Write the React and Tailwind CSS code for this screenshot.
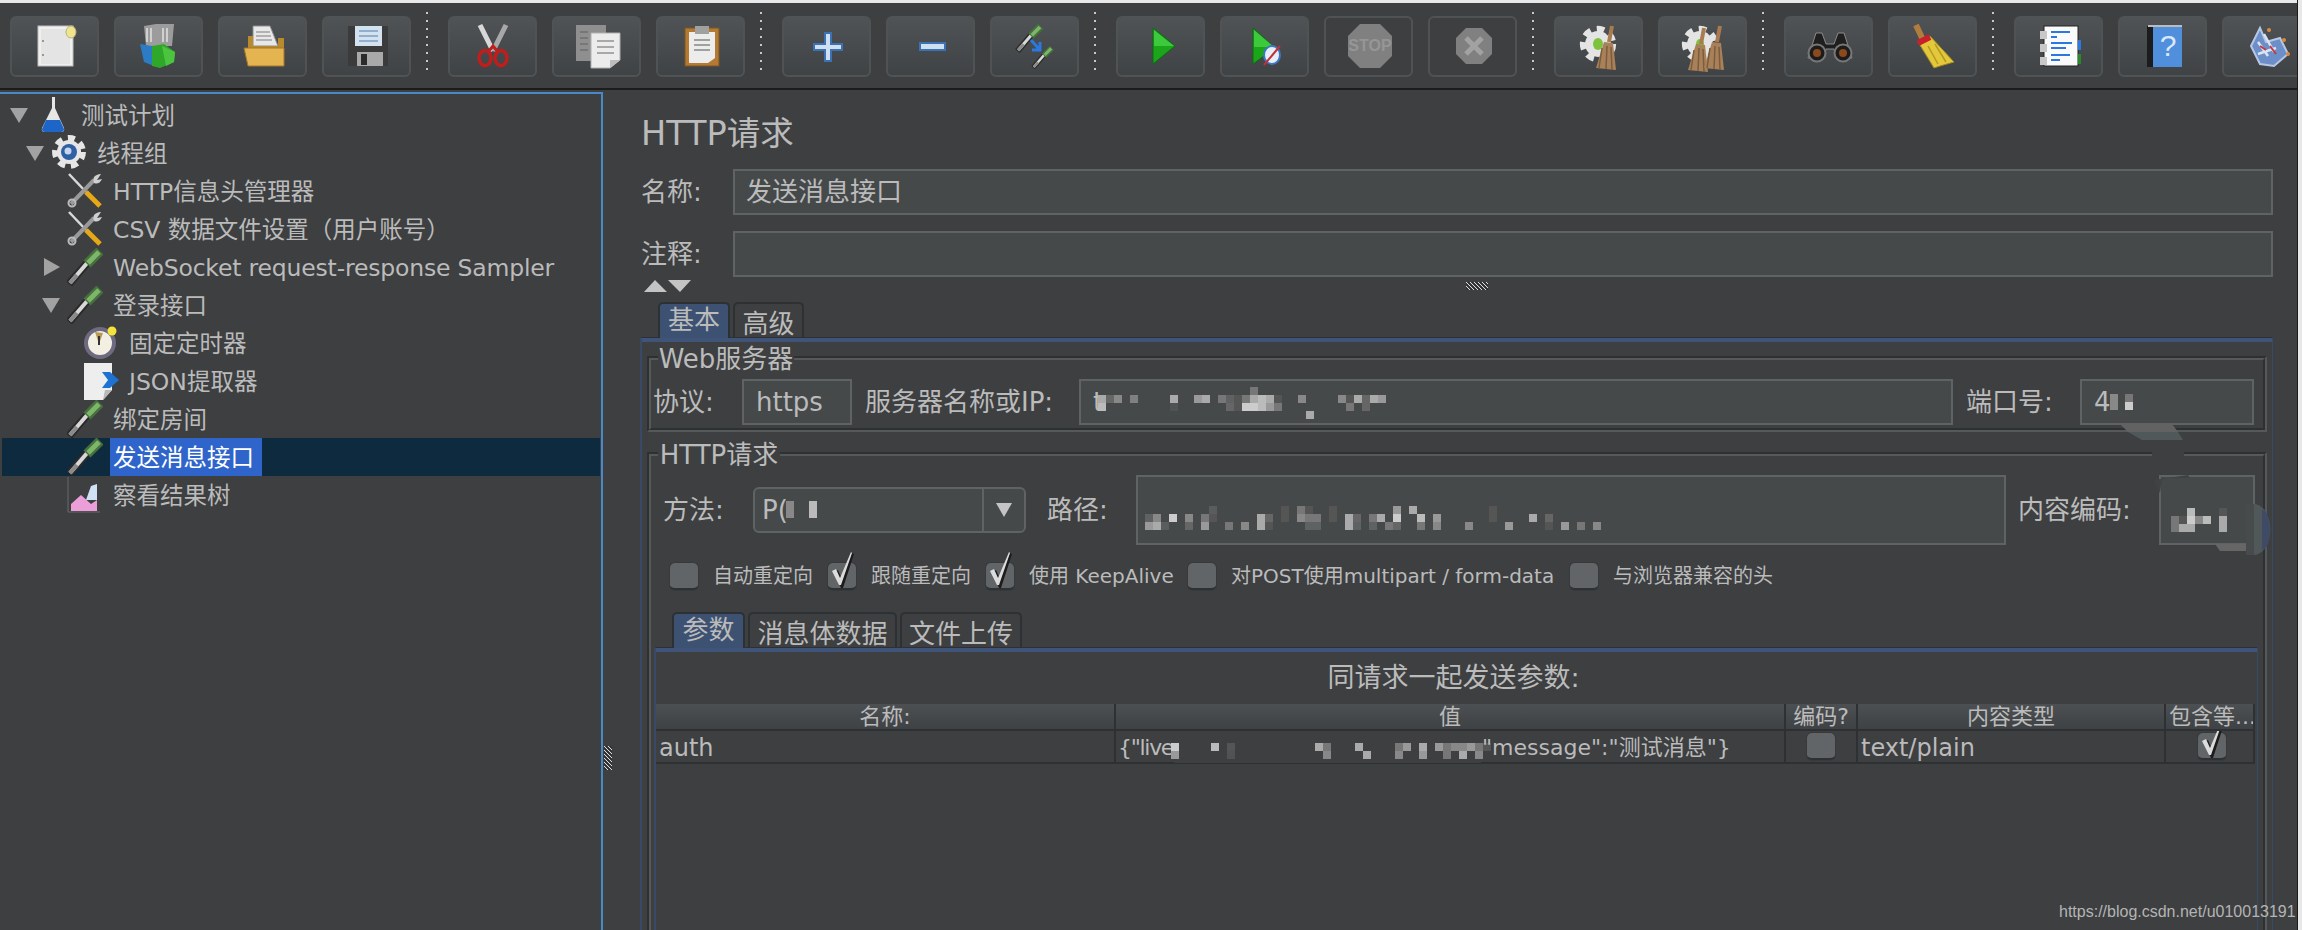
import React from 'react';

// ---- toolbar icons, drawn in the 89x61 box of a button ----
const Pipette = ({ x = 0, y = 0, s = 1 }) => (
    <g transform={`translate(${x} ${y}) scale(${s})`}>
        <path d="M2 36 L21 14" stroke="#2a2a2a" strokeWidth="8" fill="none" />
        <path d="M3 35 L21 14" stroke="#d8d8d8" strokeWidth="4" fill="none" />
        <path d="M3 35 L10 27" stroke="#8a8a8a" strokeWidth="4" fill="none" />
        <path d="M20 16 L33 3" stroke="#46703c" strokeWidth="10" fill="none" />
        <path d="M21 15 L32 4" stroke="#7db56a" strokeWidth="5" fill="none" />
    </g>
);

const Gear = ({ cx, cy, r, fill = '#e4e4e4' }) => (
    <g>
        <circle cx={cx} cy={cy} r={r} fill="none" stroke={fill} strokeWidth={r * 0.42} strokeDasharray={`${r * 0.5} ${r * 0.42}`} />
        <circle cx={cx} cy={cy} r={r * 0.86} fill={fill} />
    </g>
);

const Broom = ({ x, y }) => (
    <g transform={`translate(${x} ${y})`}>
        <path d="M16 0 L13 16" stroke="#a87c50" strokeWidth="4" />
        <path d="M8 16 L17 17 L20 44 L0 42 Z" fill="#a8815a" />
        <path d="M6 22 L3 42 M11 20 L10 43 M15 21 L16 44" stroke="#7d5c3c" strokeWidth="1.5" />
    </g>
);

const toolbarIcons = {
    door: (
        <g>
            <rect x="28" y="10" width="35" height="40" fill="#f0f0f0" stroke="#bdbdbd" />
            <rect x="31" y="13" width="29" height="35" fill="#e4e4e4" />
            <rect x="32" y="24" width="2" height="2" fill="#999" />
            <rect x="32" y="38" width="2" height="2" fill="#999" />
            <ellipse cx="61" cy="16" rx="5" ry="6" fill="#efe58f" stroke="#b9b27a" />
        </g>
    ),
    templates: (
        <g>
            <path d="M30 10 L42 8 L60 8 L58 30 L32 30 Z" fill="#9c9c9c" />
            <path d="M33 12 V26 M37 12 V26 M49 12 V26 M53 12 V26" stroke="#d0d0d0" strokeWidth="2" />
            <path d="M26 28 L38 30 L40 50 L30 46 Z" fill="#2b7cc4" />
            <path d="M38 30 L50 28 L61 36 L60 46 L46 52 L38 50 Z" fill="#2fa82a" />
            <path d="M48 30 L61 36 L60 46 L52 50 Z" fill="#4dc43f" />
        </g>
    ),
    open: (
        <g>
            <path d="M35 10 L52 10 L60 30 L35 30 Z" fill="#e8e8e8" stroke="#8d8d8d" />
            <path d="M38 16 H52 M38 20 H53 M38 24 H54" stroke="#a0a0a0" strokeWidth="1.5" />
            <path d="M30 20 L35 20 L35 30 L60 30 L60 22 L66 22 L66 50 L30 50 Z" fill="#b78a2e" />
            <path d="M26 32 L66 32 L66 50 L30 50 Z" fill="#e3b44f" stroke="#a5762a" />
        </g>
    ),
    save: (
        <g>
            <path d="M26 10 H66 V50 H26 Z" fill="#3b3b3b" />
            <rect x="33" y="10" width="27" height="20" fill="#d4e1ee" />
            <path d="M37 15 H56 M37 20 H56 M37 25 H56" stroke="#7aa0c4" strokeWidth="1.5" />
            <rect x="35" y="36" width="26" height="14" fill="#a9a9a9" />
            <rect x="39" y="38" width="6" height="11" fill="#2b2b2b" />
        </g>
    ),
    cut: (
        <g>
            <path d="M32 9 L45 35" stroke="#d8d8d8" strokeWidth="5" />
            <path d="M58 9 L45 35" stroke="#a8a8a8" strokeWidth="5" />
            <ellipse cx="37" cy="42" rx="6" ry="7.5" fill="none" stroke="#c01d1d" strokeWidth="3.5" />
            <ellipse cx="53" cy="42" rx="6" ry="7.5" fill="none" stroke="#c01d1d" strokeWidth="3.5" />
            <path d="M40 36 L45 30 L50 36" fill="none" stroke="#c01d1d" strokeWidth="3" />
        </g>
    ),
    copy: (
        <g>
            <rect x="24" y="9" width="30" height="36" fill="#8f8f8f" />
            <path d="M28 16 H36 M28 22 H36 M28 28 H36 M28 34 H36" stroke="#777" strokeWidth="2" />
            <path d="M39 17 H68 V44 L58 52 H39 Z" fill="#ececec" stroke="#b0b0b0" />
            <path d="M45 25 H62 M45 31 H62 M45 37 H62" stroke="#a8a8a8" strokeWidth="2" />
            <path d="M58 52 V44 H68 Z" fill="#bdbdbd" />
        </g>
    ),
    paste: (
        <g>
            <rect x="29" y="12" width="34" height="38" fill="#b37a33" stroke="#7f5522" />
            <path d="M33 16 H59 V42 L52 47 H33 Z" fill="#ececec" />
            <rect x="39" y="10" width="14" height="8" fill="#a0a0a0" />
            <path d="M38 24 H54 M38 29 H54 M38 34 H54" stroke="#a0a0a0" strokeWidth="2" />
        </g>
    ),
    plus: (
        <path d="M43 17 H49 V28 H60 V34 H49 V45 H43 V34 H32 V28 H43 Z" fill="#cfe0f2" stroke="#3c72b4" strokeWidth="2" />
    ),
    minus: <rect x="34" y="27" width="25" height="7" fill="#cfe0f2" stroke="#3c72b4" strokeWidth="2" />,
    toggle: (
        <g>
            <Pipette x="26" y="8" s="0.75" />
            <Pipette x="42" y="30" s="0.6" />
            <path d="M41 24 L49 33 M50 26 L50 34 L42 34" stroke="#2a78e0" strokeWidth="3" fill="none" />
        </g>
    ),
    play: (
        <g>
            <path d="M37 12 L59 30 L37 48 Z" fill="#1ba51b" stroke="#0e6a12" />
            <path d="M38 14 L58 30 L38 30 Z" fill="#3cc93c" />
        </g>
    ),
    playNoTimer: (
        <g>
            <path d="M33 12 L55 32 L33 48 Z" fill="#1ba51b" stroke="#0e6a12" />
            <path d="M34 14 L54 31 L34 31 Z" fill="#3cc93c" />
            <ellipse cx="52" cy="39" rx="8" ry="9" fill="#e8eef6" stroke="#3c78c0" strokeWidth="2" />
            <path d="M44 49 L60 30" stroke="#c0303a" strokeWidth="2" />
        </g>
    ),
    stop: (
        <g>
            <path d="M36 8 H56 L68 20 V40 L56 52 H36 L24 40 V20 Z" fill="#808080" />
            <text x="46" y="35" textAnchor="middle" fontSize="16" fontFamily="Liberation Sans" fontWeight="700" fill="#969696">STOP</text>
        </g>
    ),
    shutdown: (
        <g>
            <path d="M38 12 H54 L64 22 V38 L54 48 H38 L28 38 V22 Z" fill="#808080" />
            <path d="M38 22 L54 38 M54 22 L38 38" stroke="#a2a2a2" strokeWidth="5" />
        </g>
    ),
    clear: (
        <g>
            <Gear cx="44" cy="28" r="15" />
            <ellipse cx="44" cy="28" rx="5" ry="6" fill="#7cc23c" />
            <Broom x="42" y="10" />
        </g>
    ),
    clearAll: (
        <g>
            <Gear cx="42" cy="28" r="15" />
            <ellipse cx="42" cy="28" rx="4" ry="5" fill="#7cc23c" />
            <Broom x="30" y="12" />
            <Broom x="46" y="10" />
        </g>
    ),
    find: (
        <g>
            <path d="M32 17 L38 17 L42 28 L50 28 L54 17 L60 17 L68 42 L52 42 L50 33 L42 33 L40 42 L24 42 Z" fill="#1f1f1f" stroke="#8a8a8a" strokeWidth="1" />
            <circle cx="33" cy="37" r="8.5" fill="#1c1c1c" stroke="#777" strokeWidth="2" />
            <circle cx="59" cy="37" r="8.5" fill="#1c1c1c" stroke="#777" strokeWidth="2" />
            <circle cx="33" cy="37" r="4" fill="#8c4a1c" />
            <circle cx="59" cy="37" r="4" fill="#8c4a1c" />
        </g>
    ),
    clean: (
        <g>
            <path d="M28 9 L36 26" stroke="#b07d3c" strokeWidth="6" />
            <path d="M30 26 L42 20 L66 46 L52 50 L46 52 Z" fill="#e2c83a" stroke="#a08a20" />
            <path d="M30 27 L42 21" stroke="#c8202c" strokeWidth="6" />
            <path d="M40 30 L50 48 M47 28 L58 46" stroke="#b49a20" strokeWidth="1.5" />
        </g>
    ),
    log: (
        <g>
            <rect x="30" y="10" width="34" height="40" fill="#fafafa" stroke="#222" />
            <rect x="64" y="24" width="3" height="10" fill="#2a78e0" />
            <rect x="64" y="38" width="3" height="10" fill="#2a8a2a" />
            <rect x="26" y="15" width="7" height="8" fill="#c8c8c8" />
            <rect x="26" y="28" width="7" height="8" fill="#c8c8c8" />
            <rect x="26" y="41" width="7" height="8" fill="#c8c8c8" />
            <path d="M37 16 H56 M37 21 H43 M37 27 H58 M37 32 H52 M37 39 H56 M37 44 H46" stroke="#2a78e0" strokeWidth="2" />
        </g>
    ),
    help: (
        <g>
            <rect x="29" y="10" width="7" height="41" fill="#1c1c1c" />
            <rect x="35" y="10" width="29" height="41" fill="#4f8fdc" />
            <rect x="30" y="9" width="34" height="2" fill="#bcbcbc" />
            <text x="50" y="40" textAnchor="middle" fontSize="30" fontFamily="Liberation Sans" fill="#dbe8f8">?</text>
        </g>
    ),
    about: (
        <g>
            <path d="M29 30 L38 12 L44 26 L58 22 L66 38 L52 50 L38 48 Z" fill="#6d8fc9" stroke="#b7c6e2" strokeWidth="2" />
            <path d="M36 26 L46 40 M42 18 L52 36 M36 38 L54 32" stroke="#d9e4f4" strokeWidth="2.5" />
            <path d="M38 30 L44 34 M48 30 L54 38" stroke="#c03a40" strokeWidth="2" />
            <circle cx="47" cy="14" r="2" fill="#dc8a3c" />
            <circle cx="62" cy="24" r="2" fill="#dc8a3c" />
            <circle cx="66" cy="38" r="2" fill="#dc8a3c" />
        </g>
    ),
};

const ToolButton = ({ icon, off }) => (
    <div className={`w-[89px] h-[61px] shrink-0 rounded-[6px] border-2 border-[#505354] ${off ? '' : 'bg-gradient-to-b from-[#4f5355] to-[#404345]'}`}>
        <svg width="89" height="61" viewBox="0 0 89 61" className="-m-[2px]">{toolbarIcons[icon]}</svg>
    </div>
);

const ToolSep = () => (
    <div className="w-[7px] h-[61px] shrink-0 -mt-[4px]">
        <div className="w-[2px] h-full bg-[repeating-linear-gradient(to_bottom,#c8c8c8_0,#c8c8c8_2px,transparent_2px,transparent_8px)]" />
    </div>
);

const toolbarGroups = [
    [['door'], ['templates'], ['open'], ['save']],
    [['cut'], ['copy'], ['paste']],
    [['plus'], ['minus'], ['toggle']],
    [['play'], ['playNoTimer'], ['stop', true], ['shutdown', true]],
    [['clear'], ['clearAll']],
    [['find'], ['clean']],
    [['log'], ['help'], ['about']],
];

const Toolbar = () => (
    <div className="h-[85px] pl-[10px] pt-[13px] flex gap-[15px] overflow-hidden">
        {toolbarGroups.map((group, i) => (
            <React.Fragment key={i}>
                {i > 0 && <ToolSep />}
                {group.map(([icon, off]) => <ToolButton key={icon} icon={icon} off={off} />)}
            </React.Fragment>
        ))}
    </div>
);

// ---- tree icons ----
const treeIcons = {
    plan: (
        <g>
            <path d="M17 1 V12 L7 32 Q6 36 10 36 H26 Q30 36 29 32 L20 12 V1 Z" fill="#e6e6e6" />
            <path d="M11 24 H25 L29 33 Q29 36 26 36 H10 Q7 36 7 33 Z" fill="#1d66c8" />
        </g>
    ),
    group: (
        <g>
            <Gear cx="18" cy="18" r="14" fill="#e6e6e6" />
            <circle cx="18" cy="18" r="8" fill="#2f5fa4" />
            <circle cx="17" cy="17" r="3.5" fill="#c6d7ec" />
        </g>
    ),
    tool: (
        <g>
            <path d="M2 2 L19 20" stroke="#d8d8d8" strokeWidth="2.5" />
            <path d="M19 20 L33 34" stroke="#e6a817" strokeWidth="5" />
            <path d="M4 32 L27 8" stroke="#9a9a9a" strokeWidth="4" />
            <path d="M34 2 Q24 3 27 11 Q32 13 35 7 L30 8 Z" fill="#cfcfcf" />
            <circle cx="5" cy="31" r="3.5" fill="none" stroke="#bbb" strokeWidth="2" />
        </g>
    ),
    sampler: <Pipette />,
    timer: (
        <g>
            <circle cx="17" cy="19" r="16" fill="#6e6a80" />
            <circle cx="17" cy="19" r="12" fill="#f3efe2" />
            <path d="M12 8 L20 9 L16 20 Z" fill="#b79a5a" />
            <path d="M16 12 V21" stroke="#333" strokeWidth="2" />
            <circle cx="29" cy="7" r="4.5" fill="#f4e33a" />
        </g>
    ),
    extractor: (
        <g>
            <path d="M1 1 H29 V28 L20 38 H1 Z" fill="#eeeeee" />
            <path d="M20 38 L22 28 L29 28 Z" fill="#b8b8b8" />
            <path d="M19 10 L27 10 L36 18 L27 26 L19 26 L25 18 Z" fill="#1e72d2" />
        </g>
    ),
    results: (
        <g>
            <path d="M1 1 V36 H33" stroke="#6a6a6a" strokeWidth="1" fill="none" />
            <path d="M4 35 L4 28 L14 19 L24 28 L30 24 V35 Z" fill="#ec9ed8" />
            <path d="M19 24 L24 10 L30 8 V24 Z" fill="#cfe2f5" />
        </g>
    ),
};

const treeRows = [
    { label: '测试计划', icon: 'plan', pad: 'pl-[8px]', arrow: 'down' },
    { label: '线程组', icon: 'group', pad: 'pl-[24px]', arrow: 'down' },
    { label: 'HTTP信息头管理器', icon: 'tool', pad: 'pl-[40px]' },
    { label: 'CSV 数据文件设置（用户账号）', icon: 'tool', pad: 'pl-[40px]' },
    { label: 'WebSocket request-response Sampler', icon: 'sampler', pad: 'pl-[40px]', arrow: 'right', tight: true },
    { label: '登录接口', icon: 'sampler', pad: 'pl-[40px]', arrow: 'down' },
    { label: '固定定时器', icon: 'timer', pad: 'pl-[56px]' },
    { label: 'JSON提取器', icon: 'extractor', pad: 'pl-[56px]' },
    { label: '绑定房间', icon: 'sampler', pad: 'pl-[40px]' },
    { label: '发送消息接口', icon: 'sampler', pad: 'pl-[40px]', selected: true },
    { label: '察看结果树', icon: 'results', pad: 'pl-[40px]' },
];

const TreeRow = ({ row }) => (
    <div className={`h-[38px] flex items-center ${row.pad} ${row.selected ? 'bg-[#0e2a3f]' : ''}`}>
        <div className="w-[25px] shrink-0 flex items-center">
            {row.arrow === 'down' && <svg width="18" height="15"><path d="M0 0 H18 L9 15 Z" fill="#a2a2a2" /></svg>}
            {row.arrow === 'right' && <svg width="16" height="18" className="ml-[2px]"><path d="M0 0 L16 9 L0 18 Z" fill="#a2a2a2" /></svg>}
        </div>
        <svg width="36" height="38" viewBox="0 0 36 38" className="shrink-0">{treeIcons[row.icon]}</svg>
        <span className={`ml-[7px] pl-[3px] pr-[8px] h-[38px] leading-[41px] text-[23.5px] whitespace-nowrap ${row.tight ? 'tracking-[-0.18px]' : ''} ${row.selected ? 'bg-[#2f65ca] text-white' : ''}`}>
            {row.label}
        </span>
    </div>
);

// ---- blurred parts of the values ----
const Mosaic = ({ cells, size = 8, className = '' }) => (
    <svg width={size * 60} height={size * 4} className={`shrink-0 ${className}`}>
        {cells.map(([c, r, fill], i) => <rect key={i} x={c * size} y={r * size} width={size} height={size} fill={fill} />)}
    </svg>
);

const serverCells = [
    [19, 0, '#777'], [0, 1, '#aaa'], [1, 1, '#666'], [2, 1, '#888'], [4, 1, '#808080'], [9, 1, '#aaa'], [12, 1, '#999'], [13, 1, '#aaa'],
    [15, 1, '#777'], [16, 1, '#5f6262'], [17, 1, '#555'], [18, 1, '#777'], [19, 1, '#aaa'], [20, 1, '#bbb'], [21, 1, '#aaa'], [22, 1, '#555'],
    [25, 1, '#888'], [30, 1, '#888'], [31, 1, '#555'], [32, 1, '#aaa'], [33, 1, '#666'], [34, 1, '#aaa'], [35, 1, '#999'],
    [0, 2, '#bbb'], [16, 2, '#666'], [17, 2, '#555'], [18, 2, '#ccc'], [19, 2, '#ccc'], [20, 2, '#bbb'], [21, 2, '#999'], [22, 2, '#777'],
    [9, 2, '#4f5353'], [31, 2, '#777'], [33, 2, '#666'], [26, 3, '#aaa'],
];

const pathCells = [
    [8, 0, '#5a5d5d'], [17, 0, '#555'], [19, 0, '#777'], [20, 0, '#555'], [23, 0, '#555'], [31, 0, '#999'], [33, 0, '#aaa'], [43, 0, '#555'],
    [0, 1, '#5f6262'], [1, 1, '#888'], [3, 1, '#ccc'], [5, 1, '#888'], [7, 1, '#777'], [8, 1, '#555'], [14, 1, '#aaa'], [15, 1, '#666'], [17, 1, '#555'],
    [19, 1, '#888'], [20, 1, '#777'], [21, 1, '#777'], [23, 1, '#555'], [25, 1, '#aaa'], [26, 1, '#666'], [28, 1, '#777'], [29, 1, '#aaa'], [31, 1, '#ccc'],
    [34, 1, '#bbb'], [36, 1, '#999'], [43, 1, '#555'], [48, 1, '#aaa'], [50, 1, '#666'],
    [0, 2, '#999'], [1, 2, '#aaa'], [2, 2, '#5a5d5d'], [5, 2, '#666'], [7, 2, '#999'], [10, 2, '#777'], [12, 2, '#888'], [14, 2, '#aaa'], [15, 2, '#555'],
    [20, 2, '#5f6262'], [21, 2, '#5f6262'], [25, 2, '#aaa'], [26, 2, '#5f6262'], [28, 2, '#5f6262'], [30, 2, '#777'], [31, 2, '#666'], [34, 2, '#777'],
    [36, 2, '#888'], [40, 2, '#888'], [45, 2, '#999'], [50, 2, '#555'], [52, 2, '#999'], [54, 2, '#777'], [56, 2, '#888'],
];

const encodingCells = [
    [2, 0, '#bbb'], [6, 0, '#555'], [0, 1, '#777'], [1, 1, '#555'], [2, 1, '#ccc'], [3, 1, '#888'], [4, 1, '#bbb'], [6, 1, '#aaa'],
    [0, 2, '#777'], [1, 2, '#aaa'], [2, 2, '#aaa'], [6, 2, '#aaa'],
];

const valueCells = [
    [0, 0, '#ccc'], [0, 1, '#999'], [5, 0, '#bbb'], [7, 0, '#555'], [7, 1, '#4f5353'],
    [18, 0, '#aaa'], [19, 0, '#777'], [19, 1, '#888'], [23, 0, '#aaa'], [24, 1, '#aaa'], [28, 0, '#777'], [29, 0, '#999'], [28, 1, '#888'],
    [31, 0, '#aaa'], [31, 1, '#999'], [33, 0, '#999'], [34, 0, '#777'], [34, 1, '#777'], [35, 0, '#888'], [36, 0, '#888'], [36, 1, '#aaa'],
    [37, 0, '#999'], [38, 0, '#777'], [38, 1, '#888'], [39, 0, '#555'],
];

// ---- form parts ----
const Field = ({ className = '', children }) => (
    <div className={`border-2 border-[#606364] bg-[#45494a] flex items-center overflow-hidden ${className}`}>{children}</div>
);

const Tab = ({ label, active, className = '' }) => (
    <div className={`h-[36px] rounded-t-[5px] border-2 border-b-0 border-[#2e3133] flex justify-center text-[26px] ${active ? 'bg-[#3d5272] items-start' : 'items-end'} ${className}`}>
        <span className={active ? 'leading-[32px]' : 'leading-[28px]'}>{label}</span>
    </div>
);

// Etched frame with the title sitting on its top edge
const GroupBox = ({ title, titleBg = 'w-[136px]', className = '', children }) => (
    <div className={`relative border-2 border-t-[#2e3133] border-l-[#2e3133] border-r-[#56595a] border-b-[#56595a] ${className}`}>
        <div className="border-2 border-t-[#56595a] border-l-[#56595a] border-r-[#2e3133] border-b-[#2e3133] h-full">{children}</div>
        <div className={`absolute -top-[14px] left-[9px] h-[30px] bg-[#3d3f41] text-center text-[26px] leading-[30px] whitespace-nowrap ${titleBg}`}>{title}</div>
    </div>
);

const CheckBox = ({ checked }) => (
    <div className="relative w-[28px] h-[27px] shrink-0 rounded-[5px] border-b-2 border-b-[#2e3133] bg-[#626567] shadow-[0_0_0_1px_#37393b]">
        {checked && (
            <svg width="30" height="38" className="absolute -left-[1px] -top-[12px]">
                <path d="M7 21 L11 19 L15 28 L25 2 L27 3 L16 37 L14 37 Z" fill="#1c1c1c" />
                <path d="M5 20 L9 18 L13 27 L24 1 L25 2 L14 34 L12 34 Z" fill="#dcdcdc" />
            </svg>
        )}
    </div>
);

const Option = ({ label, checked, className = '' }) => (
    <div className={`flex items-center shrink-0 ${className}`}>
        <CheckBox checked={checked} />
        <span className="ml-[15px] text-[20px] leading-[27px] whitespace-nowrap">{label}</span>
    </div>
);

const HeadCell = ({ children, className = '' }) => (
    <div className={`h-[25px] flex items-center justify-center text-[22px] border-r-2 border-[#2e3133] overflow-hidden whitespace-nowrap ${className}`}>{children}</div>
);

const BodyCell = ({ children, className = '' }) => (
    <div className={`relative h-[31px] flex items-center border-r-2 border-[#2e3133] overflow-hidden whitespace-nowrap ${className}`}>{children}</div>
);

const hatch = (id, w, h) => (
    <>
        <pattern id={id} width="4" height="4" patternUnits="userSpaceOnUse">
            <path d="M0 0 L4 4" stroke="#dcdcdc" strokeWidth="1" />
            <path d="M2 0 L6 4 M-2 0 L2 4" stroke="#2a2a2a" strokeWidth="1" />
        </pattern>
        <rect width={w} height={h} fill={`url(#${id})`} />
    </>
);

const App = () => (
    <div className="relative w-[2302px] h-[930px] overflow-hidden flex bg-[#3d3f41] text-[#bbbbbb] [font-family:'DejaVu_Sans','Noto_Sans_CJK_SC',sans-serif]">
        <div className="w-[2297px] shrink-0 flex flex-col">
            <div className="h-[3px] bg-[#e8e8e8]" />
            <Toolbar />
            <div className="h-[2px] bg-[#1c1c1c]" />

            <div className="flex-1 flex min-h-0">
                {/* Tree */}
                <div className="w-[603px] shrink-0 mt-[2px] border-t-2 border-r-2 border-[#4a88c7] pt-[2px] pl-[2px] pr-[1px]">
                    {treeRows.map((row) => <TreeRow key={row.label} row={row} />)}
                </div>

                {/* Splitter */}
                <div className="w-[38px] shrink-0 relative">
                    <svg width="8" height="24" className="absolute left-[1px] top-[656px]">{hatch('grip', 8, 24)}</svg>
                </div>

                {/* Sampler form */}
                <div className="w-[1632px] shrink-0 pt-[26px] flex flex-col min-h-0">
                    <div className="h-[34px] leading-[35px] text-[33.5px] whitespace-nowrap">HTTP请求</div>
                    <div className="mt-[19px] flex items-center">
                        <div className="w-[92px] text-[26px]">名称:</div>
                        <Field className="flex-1 h-[46px] pl-[11px] text-[26px]">发送消息接口</Field>
                    </div>
                    <div className="mt-[16px] flex items-center">
                        <div className="w-[92px] text-[26px]">注释:</div>
                        <Field className="flex-1 h-[46px]" />
                    </div>
                    <div className="mt-[3px] h-[12px] flex items-center">
                        <svg width="48" height="12" className="ml-[3px]">
                            <path d="M0 12 L11 0 L23 12 Z M24 0 H47 L36 12 Z" fill="#c4c4c4" />
                        </svg>
                        <svg width="22" height="8" className="ml-[774px]">{hatch('gripH', 22, 8)}</svg>
                    </div>

                    <div className="mt-[10px] pl-[17px] flex gap-[3px] relative z-10">
                        <Tab label="基本" active className="w-[72px]" />
                        <Tab label="高级" className="w-[71px]" />
                    </div>

                    <div className="-ml-[1px] -mt-[1px] flex-1 min-h-0 overflow-hidden border-t border-[#2e3133] border-l-2 border-r border-l-[#384a66] border-r-[#384a66]">
                        <div className="h-[4px] bg-[#3f5478]" />
                        <div className="pl-[5px] pr-[5px] pt-[14px]">
                            <GroupBox title="Web服务器" titleBg="w-[136px]" className="h-[76px]">
                                <div className="pt-[19px] pl-[2px] flex items-center text-[26px] whitespace-nowrap">
                                    <div className="w-[89px]">协议:</div>
                                    <Field className="w-[110px] h-[46px] pl-[12px]">https</Field>
                                    <div className="ml-[13px] w-[214px]">服务器名称或IP:</div>
                                    <Field className="w-[874px] h-[46px] pl-[12px]">
                                        <span className="-mr-[5px]">t</span>
                                        <Mosaic cells={serverCells} className="mt-[2px]" />
                                    </Field>
                                    <div className="ml-[13px] w-[114px]">端口号:</div>
                                    <Field className="w-[174px] h-[46px] pl-[12px]">
                                        <span>4</span>
                                        <svg width="32" height="18" className="shrink-0 -ml-[4px]">
                                            <rect x="3" y="1" width="8" height="16" fill="#888" />
                                            <rect x="18" y="1" width="8" height="8" fill="#777" />
                                            <rect x="18" y="9" width="8" height="8" fill="#ccc" />
                                        </svg>
                                    </Field>
                                </div>
                            </GroupBox>

                            <GroupBox title="HTTP请求" titleBg="w-[122px]" className="mt-[20px] h-[620px]">
                                <div className="pt-[19px]">
                                    <div className="h-[70px] pl-[12px] flex items-center text-[26px] whitespace-nowrap">
                                        <div className="w-[90px]">方法:</div>
                                        <div className="w-[273px] h-[46px] rounded-[6px] border-2 border-[#606364] bg-[#45494a] flex items-center">
                                            <div className="w-[227px] pl-[7px] flex items-center">
                                                <span>P(</span>
                                                <svg width="34" height="18" className="-ml-[2px]">
                                                    <rect x="0" y="0" width="8" height="17" fill="#888" />
                                                    <rect x="23" y="0" width="8" height="17" fill="#bbb" />
                                                </svg>
                                            </div>
                                            <div className="h-full flex-1 border-l-2 border-[#606364] flex items-center justify-center">
                                                <svg width="16" height="14"><path d="M0 0 H16 L8 14 Z" fill="#c4c4c4" /></svg>
                                            </div>
                                        </div>
                                        <div className="ml-[21px] w-[89px]">路径:</div>
                                        <Field className="w-[870px] h-[70px] pl-[7px]">
                                            <Mosaic cells={pathCells} className="mt-[24px]" />
                                        </Field>
                                        <div className="ml-[12px] w-[141px]">内容编码:</div>
                                        <Field className="w-[96px] h-[70px] pl-[10px]">
                                            <Mosaic cells={encodingCells} className="mt-[28px]" />
                                        </Field>
                                    </div>

                                    <div className="mt-[18px] pl-[19px] h-[27px] flex">
                                        <Option label="自动重定向" className="w-[158px]" />
                                        <Option label="跟随重定向" checked className="w-[158px]" />
                                        <Option label="使用 KeepAlive" checked className="w-[202px]" />
                                        <Option label="对POST使用multipart / form-data" className="w-[382px]" />
                                        <Option label="与浏览器兼容的头" />
                                    </div>

                                    <div className="mt-[22px] pl-[21px] flex gap-[3px] relative z-10">
                                        <Tab label="参数" active className="w-[73px]" />
                                        <Tab label="消息体数据" className="w-[149px]" />
                                        <Tab label="文件上传" className="w-[122px]" />
                                    </div>

                                    <div className="ml-[3px] w-[1604px] -mt-[1px] h-[300px] border-t border-[#2e3133] border-l-2 border-r border-l-[#384a66] border-r-[#384a66]">
                                        <div className="h-[4px] bg-[#3f5478]" />
                                        <div className="h-[52px] pr-[6px] flex items-center justify-center text-[27px]">同请求一起发送参数:</div>
                                        <div className="w-[1599px] grid grid-cols-[460px_670px_72px_308px_89px] bg-gradient-to-b from-[#4c5053] to-[#3f4244]">
                                            <HeadCell>名称:</HeadCell>
                                            <HeadCell>值</HeadCell>
                                            <HeadCell>编码?</HeadCell>
                                            <HeadCell>内容类型</HeadCell>
                                            <HeadCell className="justify-start pl-[3px]">包含等...</HeadCell>
                                        </div>
                                        <div className="w-[1599px] grid grid-cols-[460px_670px_72px_308px_89px] border-t-2 border-b-2 border-[#2e3133]">
                                            <BodyCell className="pl-[3px] pt-[2px] text-[24px]">auth</BodyCell>
                                            <BodyCell className="pl-[2px] pt-[2px] text-[22px]">
                                                <span className="w-[53px] shrink-0 tracking-[-1.3px]">{'{"live'}</span>
                                                <Mosaic cells={valueCells} className="mt-[23px]" />
                                                <span className="absolute left-[366px]">{'"message":"测试消息"}'}</span>
                                            </BodyCell>
                                            <BodyCell className="justify-center"><CheckBox /></BodyCell>
                                            <BodyCell className="pl-[3px] pt-[2px] text-[24px]">text/plain</BodyCell>
                                            <BodyCell className="justify-center pl-[4px]"><CheckBox checked /></BodyCell>
                                        </div>
                                    </div>
                                </div>
                            </GroupBox>
                        </div>
                    </div>
                </div>
            </div>
        </div>

        <div className="w-[1px] shrink-0 bg-[#1c1c1c]" />
        <div className="flex-1 bg-[#e8e8e8]" />

        {/* Smudges left by the blurring, on top of the form */}
        <svg width="2302" height="930" className="absolute left-0 top-0 pointer-events-none">
            <path d="M2120 424 H2172 L2178 432 H2128 Z" fill="#626262" />
            <path d="M2128 432 H2178 L2183 440 H2142 Z" fill="#50585a" />
            <rect x="2152" y="450" width="32" height="8" fill="#3d3f41" />
            <path d="M2153 480 L2188 475 L2190 478 L2162 478 L2160 493 Z" fill="#404345" />
            <path d="M2215 544 H2246 V551 H2220 Z" fill="#666" />
            <rect x="2246" y="504" width="8" height="51" fill="#484b4c" />
            <path d="M2254 504 A16 25 0 0 1 2254 555 Z" fill="#50585a" />
            <path d="M2262 510 A8 20 0 0 1 2262 550 Z" fill="#3f4b66" />
            <rect x="1174" y="760" width="307" height="3" fill="#3d3f41" />
            <text x="2059" y="917" fontSize="16" fontFamily="Liberation Sans" fill="#b4b4b4">https://blog.csdn.net/u010013191</text>
        </svg>
    </div>
);

export default App;
